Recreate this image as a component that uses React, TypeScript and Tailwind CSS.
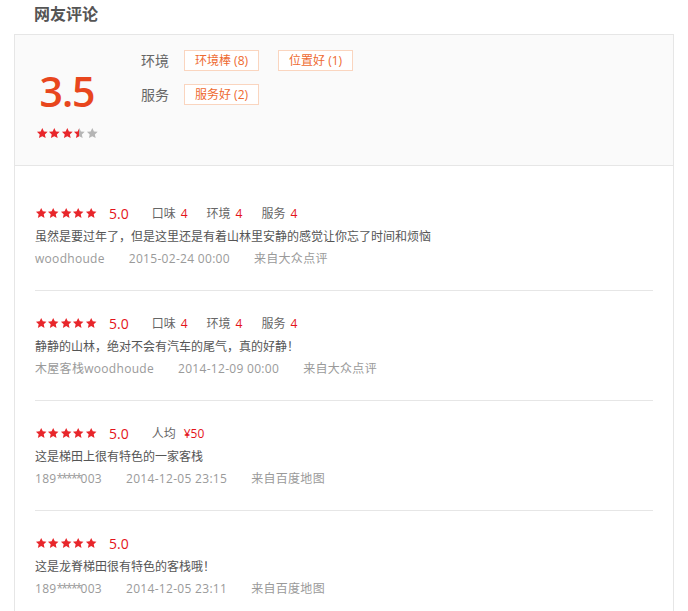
import React from "react";

const STAR = "M12 1.8l3.1 6.6 7.1.8-5.3 4.9 1.5 7.1L12 17.6l-6.4 3.6 1.5-7.1-5.3-4.9 7.1-.8z";

function Star({ fill, size = 12, half = false, id }: { fill: string; size?: number; half?: boolean; id?: string }) {
  return (
    <svg width={size} height={size} viewBox="0 0 24 24" className="block shrink-0">
      {half ? (
        <>
          <defs>
            <linearGradient id={id} x1="0" x2="1" y1="0" y2="0">
              <stop offset="50%" stopColor="#e8262b" />
              <stop offset="50%" stopColor="#b5b5b5" />
            </linearGradient>
          </defs>
          <path d={STAR} fill={`url(#${id})`} />
        </>
      ) : (
        <path d={STAR} fill={fill} />
      )}
    </svg>
  );
}

function Stars({ score, size = 12.5, idp }: { score: number; size?: number; idp: string }) {
  return (
    <div className="flex items-center">
      {[0, 1, 2, 3, 4].map((i) => {
        if (score >= i + 1) return <Star key={i} fill="#e8262b" size={size} />;
        if (score > i) return <Star key={i} fill="" size={size} half id={`${idp}-h${i}`} />;
        return <Star key={i} fill="#b5b5b5" size={size} />;
      })}
    </div>
  );
}

type Review = {
  ratings?: { label: string; value: string; gap?: string }[];
  text: string;
  user: React.ReactNode;
  date: string;
  source: string;
};

const Masked = () => (
  <>
    189<span className="tracking-[-1.8px]">*****</span>003
  </>
);

const reviews: Review[] = [
  {
    ratings: [
      { label: "口味", value: "4" },
      { label: "环境", value: "4" },
      { label: "服务", value: "4" },
    ],
    text: "虽然是要过年了，但是这里还是有着山林里安静的感觉让你忘了时间和烦恼",
    user: "woodhoude",
    date: "2015-02-24 00:00",
    source: "来自大众点评",
  },
  {
    ratings: [
      { label: "口味", value: "4" },
      { label: "环境", value: "4" },
      { label: "服务", value: "4" },
    ],
    text: "静静的山林，绝对不会有汽车的尾气，真的好静！",
    user: "木屋客栈woodhoude",
    date: "2014-12-09 00:00",
    source: "来自大众点评",
  },
  {
    ratings: [{ label: "人均", value: "¥50", gap: "ml-[8px]" }],
    text: "这是梯田上很有特色的一家客栈",
    user: <Masked />,
    date: "2014-12-05 23:15",
    source: "来自百度地图",
  },
  {
    text: "这是龙脊梯田很有特色的客栈哦！",
    user: <Masked />,
    date: "2014-12-05 23:11",
    source: "来自百度地图",
  },
];

function Tag({ children }: { children: React.ReactNode }) {
  return (
    <span className="h-[21px] px-[10px] flex items-center border border-[#fad5bf] bg-white text-[12px] text-[#ee6a30] leading-none whitespace-nowrap">
      {children}
    </span>
  );
}

export default function App() {
  return (
    <div
      className="w-[688px] h-[611px] overflow-hidden bg-white"
      style={{ fontFamily: '"Open Sans", "Noto Sans CJK SC", sans-serif' }}
    >
      <div className="h-[34px] pl-[34px] flex items-center">
        <h2 className="text-[16px] font-bold text-[#555] leading-none -mt-[6px]">网友评论</h2>
      </div>
      <div className="ml-[14px] mr-[14px] border-l border-r border-t border-[#e6e6e6] min-h-[600px]">
        {/* summary */}
        <div className="h-[131px] bg-[#fafafa] border-b border-[#e6e6e6] flex pl-[20px] pt-[15px]">
          <div className="w-[64px] flex flex-col items-center">
            <div className="mt-[19px] text-[41px] leading-[44px] text-[#e8461d] font-semibold tracking-[-1px]">3.5</div>
            <div className="mt-[14px]">
              <Stars score={3.5} idp="sum" size={12.6} />
            </div>
          </div>
          <div className="ml-[42px] flex flex-col gap-[13px]">
            <div className="flex items-center">
              <span className="text-[14px] text-[#666] w-[43px]">环境</span>
              <div className="flex gap-[19px]">
                <Tag>环境棒 (8)</Tag>
                <Tag>位置好 (1)</Tag>
              </div>
            </div>
            <div className="flex items-center">
              <span className="text-[14px] text-[#666] w-[43px]">服务</span>
              <Tag>服务好 (2)</Tag>
            </div>
          </div>
        </div>
        {/* list */}
        <div className="px-[20px] pt-[15px]">
          {reviews.map((r, i) => (
            <div key={i} className="pt-[20px] pb-[20px] border-b border-[#e6e6e6]">
              <div className="h-[25px] flex items-center">
                <Stars score={5} idp={`r${i}`} size={12.4} />
                <span className="ml-[12px] text-[14px] text-[#e4141b] leading-none">5.0</span>
                {r.ratings && (
                  <div className="ml-[23px] flex items-center text-[12px]">
                    {r.ratings.map((x, j) => (
                      <span key={j} className={`flex items-center ${j > 0 ? "ml-[19px]" : ""}`}>
                        <span className="text-[#666]">{x.label}</span>
                        <span className={`${x.gap ?? "ml-[5px]"} text-[#e4141b]`}>{x.value}</span>
                      </span>
                    ))}
                  </div>
                )}
              </div>
              <div className="h-[22px] flex items-center text-[12px] text-[#555]">{r.text}</div>
              <div className="h-[22px] flex items-center text-[12px] text-[#9a9a9a] tracking-[0.3px]">
                <span className="mr-[24px]">{r.user}</span>
                <span className="mr-[24px]">{r.date}</span>
                <span>{r.source}</span>
              </div>
            </div>
          ))}
        </div>
      </div>
    </div>
  );
}
